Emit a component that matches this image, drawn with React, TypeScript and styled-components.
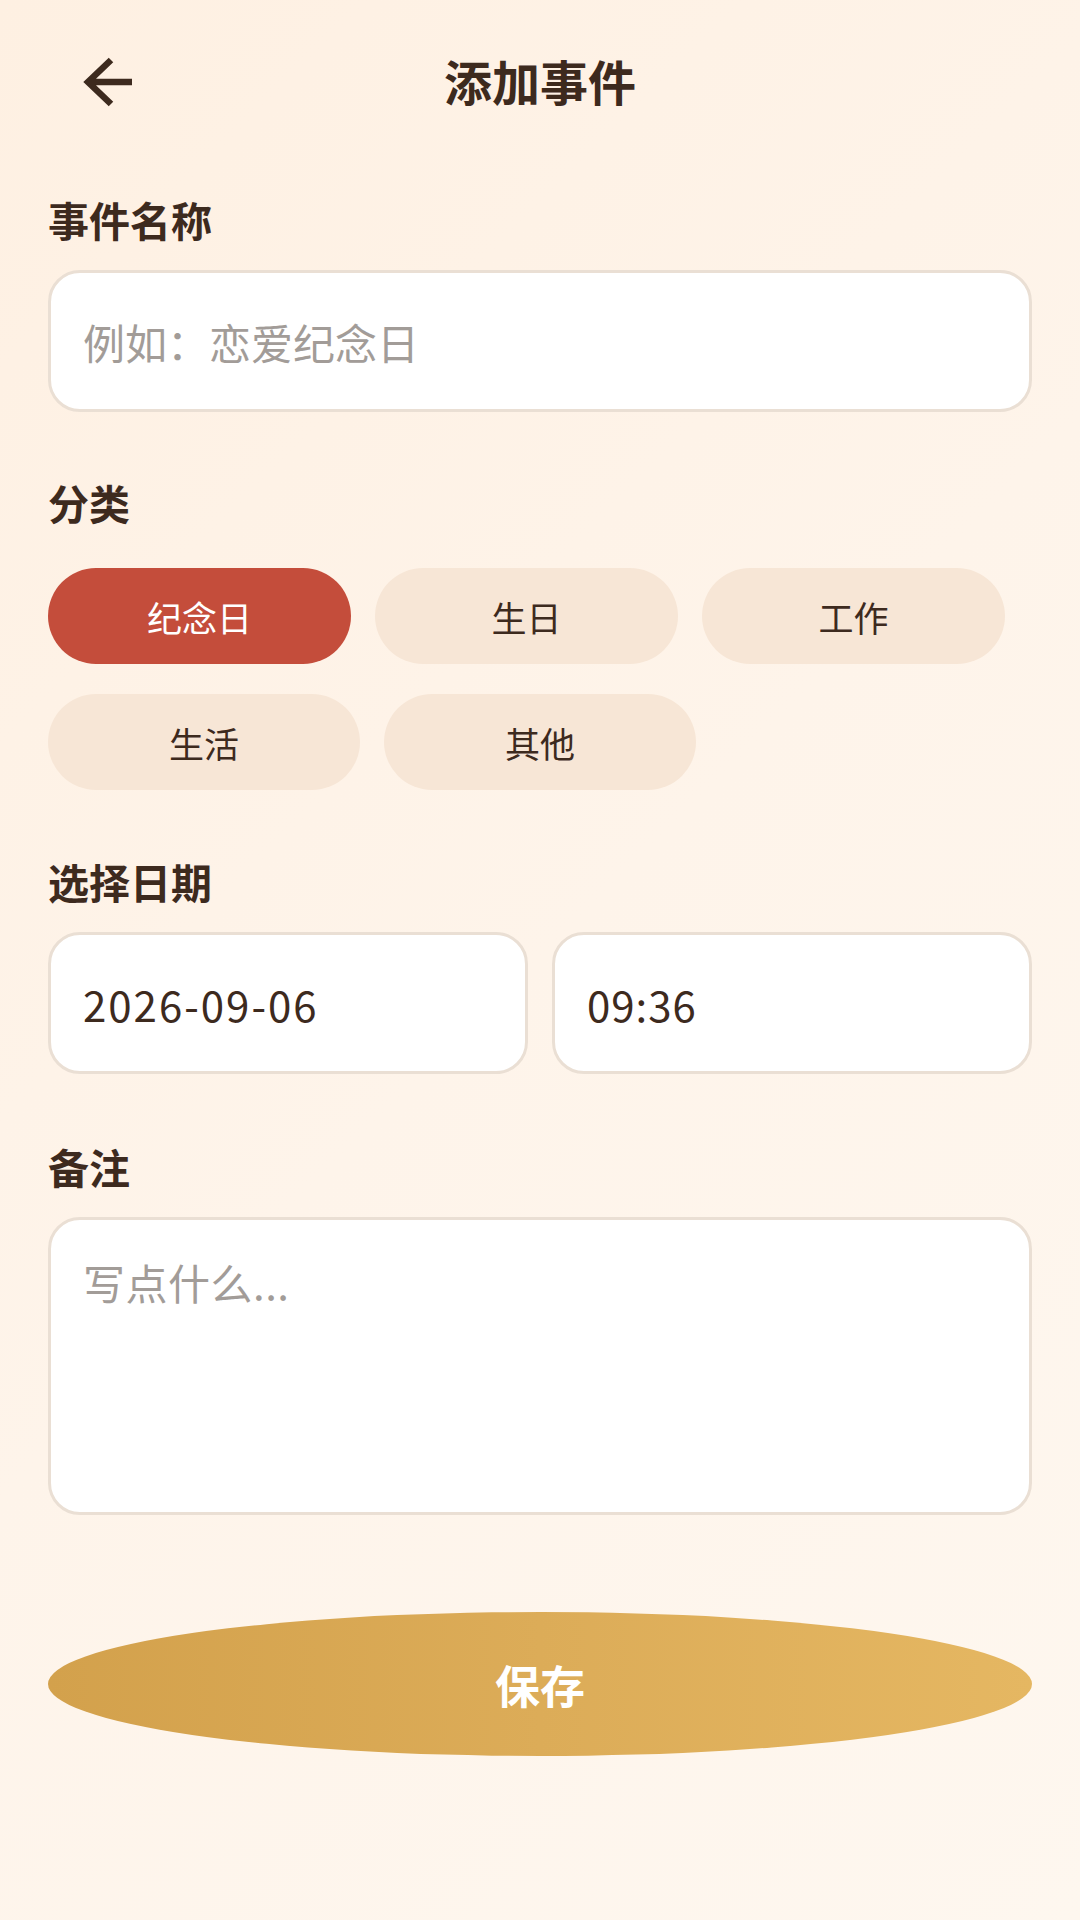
import React from "react";
import styled, { createGlobalStyle } from "styled-components";

const GlobalStyle = createGlobalStyle`
  * { box-sizing: border-box; }
  body {
    margin: 0;
    font-family: "Noto Sans CJK SC", "Noto Sans", sans-serif;
    color: #3d2a1e;
  }
`;

const Page = styled.div`
  min-height: 1920px;
  padding: 0 48px;
  background: linear-gradient(135deg, #fef0e2 0%, #fef4ea 50%, #fef7ef 100%);
`;

const Header = styled.header`
  height: 168px;
  padding-bottom: 8px;
  display: grid;
  grid-template-columns: 1fr auto 1fr;
  align-items: center;
`;

const BackButton = styled.button`
  width: 120px;
  height: 120px;
  padding: 0;
  margin-top: 4px;
  border: none;
  background: transparent;
  display: flex;
  align-items: center;
  justify-content: center;
  justify-self: start;
  cursor: pointer;
`;

const Title = styled.h1`
  margin: 0;
  font-size: 48px;
  font-weight: 700;
  color: #3d2a1e;
`;

const Section = styled.section<{ $top: number }>`
  margin-top: ${(p) => p.$top}px;
`;

const Label = styled.div`
  font-size: 41px;
  font-weight: 700;
  line-height: 51px;
  margin-bottom: 25px;
  color: #3d2a1e;
`;

const TextInput = styled.input<{ $spacing?: number }>`
  display: block;
  width: 100%;
  height: 142px;
  padding: 0 32px;
  border: 3px solid #eadfd4;
  border-radius: 32px;
  background: #fff;
  font-family: "Noto Sans CJK SC", "Noto Sans", sans-serif;
  font-size: 42px;
  letter-spacing: ${(p) => p.$spacing ?? 0}px;
  color: #3d2a1e;
  outline: none;
  &::placeholder {
    color: #a29c98;
    letter-spacing: 0;
  }
`;

const ChipWrap = styled.div`
  display: flex;
  flex-wrap: wrap;
  column-gap: 24px;
  row-gap: 30px;
  padding-top: 15px;
`;

const Chip = styled.button<{ $active?: boolean; $width: number }>`
  width: ${(p) => p.$width}px;
  height: 96px;
  border: none;
  border-radius: 48px;
  background: ${(p) => (p.$active ? "#c44d3b" : "#f7e6d6")};
  color: ${(p) => (p.$active ? "#ffffff" : "#3d2a1e")};
  font-family: "Noto Sans CJK SC", "Noto Sans", sans-serif;
  font-size: 35px;
  cursor: pointer;
`;

const DateRow = styled.div`
  display: grid;
  grid-template-columns: 1fr 1fr;
  gap: 24px;
`;

const NoteArea = styled.textarea`
  display: block;
  width: 100%;
  height: 298px;
  padding: 30px 32px;
  border: 3px solid #eadfd4;
  border-radius: 32px;
  background: #fff;
  resize: none;
  font-family: "Noto Sans CJK SC", "Noto Sans", sans-serif;
  font-size: 42px;
  line-height: 1.5;
  color: #3d2a1e;
  outline: none;
  &::placeholder {
    color: #a29c98;
    letter-spacing: 0.5px;
  }
`;

const SaveButton = styled.button`
  display: block;
  width: 100%;
  height: 144px;
  margin-top: 97px;
  border: none;
  border-radius: 50%;
  background: linear-gradient(90deg, #d3a14c 0%, #dcac58 50%, #e5b762 100%);
  color: #fff;
  font-family: "Noto Sans CJK SC", "Noto Sans", sans-serif;
  font-size: 45px;
  font-weight: 700;
  cursor: pointer;
`;

const categories = [
  { name: "纪念日", width: 303 },
  { name: "生日", width: 303 },
  { name: "工作", width: 303 },
  { name: "生活", width: 312 },
  { name: "其他", width: 312 },
];

function BackArrow() {
  return (
    <svg width="56" height="56" viewBox="0 0 56 56" fill="none">
      <path
        d="M31 6 L8 28 L31 50 M8 28 H52"
        stroke="#3d2a1e"
        strokeWidth="6.5"
        strokeLinejoin="miter"
      />
    </svg>
  );
}

export default function App() {
  return (
    <>
      <GlobalStyle />
      <Page>
        <Header>
          <BackButton aria-label="返回">
            <BackArrow />
          </BackButton>
          <Title>添加事件</Title>
          <div />
        </Header>

        <Section $top={26}>
          <Label>事件名称</Label>
          <TextInput placeholder="例如：恋爱纪念日" />
        </Section>

        <Section $top={65}>
          <Label>分类</Label>
          <ChipWrap>
            {categories.map((c, i) => (
              <Chip key={c.name} $width={c.width} $active={i === 0}>
                {c.name}
              </Chip>
            ))}
          </ChipWrap>
        </Section>

        <Section $top={66}>
          <Label>选择日期</Label>
          <DateRow>
            <TextInput defaultValue="2026-09-06" readOnly $spacing={2} />
            <TextInput defaultValue="09:36" readOnly $spacing={1} />
          </DateRow>
        </Section>

        <Section $top={67}>
          <Label>备注</Label>
          <NoteArea placeholder="写点什么..." />
        </Section>

        <SaveButton>保存</SaveButton>
      </Page>
    </>
  );
}
